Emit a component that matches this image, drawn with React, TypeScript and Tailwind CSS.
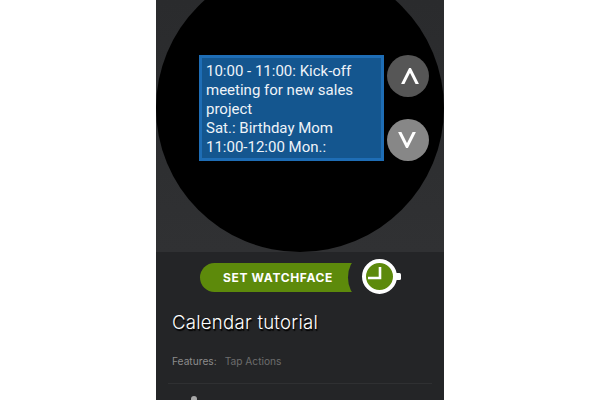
export default function App() {
  return (
    <div className="h-[400px] w-[600px] overflow-hidden bg-white font-['Roboto',sans-serif]">
      <div className="mx-auto h-[400px] w-[288px] overflow-hidden bg-[#242527]">
        {/* watch preview */}
        <div className="h-[252px] overflow-hidden bg-gradient-to-b from-[#2a2b2d] to-[#303133]">
          <div className="-mt-[36px] flex h-[288px] w-[288px] items-start rounded-full bg-black pl-[43px] pt-[91px]">
            <div className="h-[106px] w-[185px] border-[3px] border-[#1e6db5] bg-[#14568f] pl-[4px] pt-[4px] text-[15px] leading-[19px] text-[#eef3f8]">
              10:00 - 11:00: Kick-off
              <br />
              meeting for new sales
              <br />
              project
              <br />
              Sat.: Birthday Mom
              <br />
              11:00-12:00 Mon.:
            </div>
            <div className="ml-[3px] flex h-[106px] flex-col justify-between">
              <button className="flex h-[42px] w-[42px] items-center justify-center rounded-full bg-[#565656] pl-[3px]">
                <svg width="18" height="16" viewBox="0 0 18 16" fill="none" stroke="#fff" strokeWidth="3">
                  <path d="M1.5 16.5 9 1.5 16.5 16.5" />
                </svg>
              </button>
              <button className="flex h-[42px] w-[42px] items-center justify-center rounded-full bg-[#878787] pr-[2px]">
                <svg width="18" height="16" viewBox="0 0 18 16" fill="none" stroke="#fff" strokeWidth="3">
                  <path d="M1.5 -.5 9 14.5 16.5 -.5" />
                </svg>
              </button>
            </div>
          </div>
        </div>

        {/* set watchface */}
        <div className="ml-[44px] mt-[11px] flex h-[29px] items-center">
          <div className="relative flex h-[29px] w-[154px] items-center overflow-hidden rounded-l-full bg-[#5d8a0b] pl-[23px] font-['Inter',sans-serif] text-[12px] font-bold tracking-[0.65px] text-white">
            SET WATCHFACE
            <span className="absolute -right-[12px] top-[-3px] h-[35px] w-[18px] rounded-[50%] bg-[#242527]" />
          </div>
          <svg className="ml-[7px] -mt-[1px]" width="42" height="38" viewBox="0 0 42 38">
            <rect x="33" y="15" width="7" height="7" rx="1.5" fill="#fff" />
            <circle cx="18.5" cy="18.5" r="15.5" fill="#5d8a0b" stroke="#fff" strokeWidth="4" />
            <path d="M19 9V20H7" fill="none" stroke="#fff" strokeWidth="2.6" />
          </svg>
        </div>

        {/* info */}
        <div className="pl-[16px] pt-[19px] font-['Inter',sans-serif] text-[18.6px] font-light leading-[22px] tracking-[0.25px] text-white [text-shadow:1px_2px_1px_#000]">
          Calendar tutorial
        </div>
        <div className="flex gap-[8px] pl-[16px] pt-[21px] font-['Inter',sans-serif] text-[10.2px] leading-[14px]">
          <span className="text-[#8c8c8c]">Features:</span>
          <span className="text-[#6d6d6d]">Tap Actions</span>
        </div>
        <div className="mx-[12px] mt-[15px] border-t border-[#2f3032]" />
        <div className="ml-[35px] mt-[12px] h-[6px] w-[6px] rounded-full bg-[#a8a8a8]" />
      </div>
    </div>
  );
}
